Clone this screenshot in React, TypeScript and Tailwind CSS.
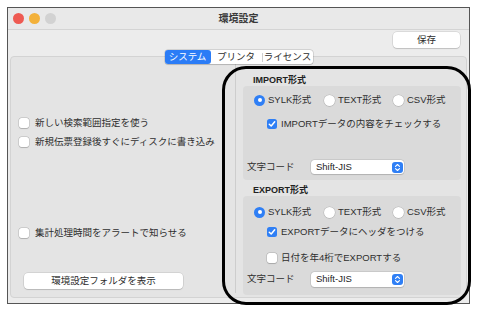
import React from "react";

const FONT = "font-['Liberation_Sans','Noto_Sans_CJK_JP',sans-serif]";

function Check({ checked }: { checked: boolean }) {
  if (checked) {
    return (
      <span className="w-[10px] h-[10px] rounded-[2.5px] bg-[#2f7ff5] flex items-center justify-center shrink-0">
        <svg width="8" height="8" viewBox="0 0 8 8">
          <path d="M1.3 4.2 L3.2 6 L6.7 1.8" fill="none" stroke="white" strokeWidth="1.5" strokeLinecap="round" strokeLinejoin="round" />
        </svg>
      </span>
    );
  }
  return (
    <span className="w-[10px] h-[10px] rounded-[2.5px] bg-white shadow-[0_0_0_0.5px_rgba(0,0,0,0.18),0_0.5px_1px_rgba(0,0,0,0.15)] shrink-0" />
  );
}

function Radio({ on, label, w }: { on: boolean; label: string; w: string }) {
  return (
    <div className={`flex items-center gap-[3px] ${w}`}>
      {on ? (
        <span className="w-[11px] h-[11px] rounded-full bg-[#2f7ff5] flex items-center justify-center shrink-0">
          <span className="w-[4px] h-[4px] rounded-full bg-white" />
        </span>
      ) : (
        <span className="w-[11px] h-[11px] rounded-full bg-white shadow-[0_0_0_0.5px_rgba(0,0,0,0.15),0_0.5px_1px_rgba(0,0,0,0.15)] shrink-0" />
      )}
      <span>{label}</span>
    </div>
  );
}

function Select({ h }: { h: string }) {
  return (
    <div className={`w-[93px] ${h} rounded-[3.5px] bg-white shadow-[0_0_0_0.5px_rgba(0,0,0,0.15),0_1px_1px_rgba(0,0,0,0.12)] flex items-center justify-between pl-[5px] pr-[1px]`}>
      <span className="text-[#1e1e1e]">Shift-JIS</span>
      <span className="w-[11px] h-[11px] rounded-[3px] bg-[#2f7ff5] flex items-center justify-center">
        <svg width="7" height="9" viewBox="0 0 7 9">
          <path d="M1.5 3.3 L3.5 1.5 L5.5 3.3 M1.5 5.7 L3.5 7.5 L5.5 5.7" fill="none" stroke="white" strokeWidth="1.1" strokeLinecap="round" strokeLinejoin="round" />
        </svg>
      </span>
    </div>
  );
}

export default function App() {
  return (
    <div className={`relative w-[481px] h-[311px] bg-white pt-[7px] pl-[7px] overflow-hidden ${FONT} text-[9.5px] text-[#2e2e2e]`}>
      <div className="w-[463px] h-[297px] border border-[#555555] bg-[#ececec] flex flex-col">
        {/* title bar */}
        <div className="h-[22px] shrink-0 border-b border-[#d4d4d4] bg-[#e9e9e9] grid grid-cols-[1fr_auto_1fr] items-center">
          <div className="flex gap-[5px] pl-[5px]">
            <span className="w-[11px] h-[11px] rounded-full bg-[#ee5a52]" />
            <span className="w-[11px] h-[11px] rounded-full bg-[#f3b13a]" />
            <span className="w-[11px] h-[11px] rounded-full bg-[#d2d2d2]" />
          </div>
          <div className="text-[10px] font-semibold text-[#3a3a3a]">環境設定</div>
          <div />
        </div>

        {/* body */}
        <div className="flex-1 flex flex-col">
          <div className="flex justify-end pt-[2px] pr-[9px]">
            <div className="w-[67px] h-[16px] rounded-[4px] bg-white shadow-[0_0_0_0.5px_rgba(0,0,0,0.15),0_1px_1px_rgba(0,0,0,0.12)] flex items-center justify-center">
              保存
            </div>
          </div>

          <div className="relative z-10 mt-[2px] flex justify-center">
            <div className="flex h-[14px] rounded-[3px] bg-white shadow-[0_0_0_0.5px_rgba(0,0,0,0.2),0_0.5px_1px_rgba(0,0,0,0.12)] items-center">
              <div className="w-[46px] h-[14px] rounded-[3px] bg-[#2b7cf6] text-white flex items-center justify-center">システム</div>
              <div className="w-[51px] h-[14px] flex items-center justify-center">プリンタ</div>
              <div className="w-px h-[9px] bg-[#cfcfcf]" />
              <div className="w-[50px] h-[14px] flex items-center justify-center">ライセンス</div>
            </div>
          </div>

          <div className="-mt-[8px] mx-[2px] h-[242px] border border-[#d3d3d3] rounded-[4px] bg-[#e4e4e4] flex">
            {/* left column */}
            <div className="w-[224px] flex flex-col pl-[8px] pt-[58px]">
              <div className="h-[16px] flex items-center gap-[6px]">
                <Check checked={false} />
                <span>新しい検索範囲指定を使う</span>
              </div>
              <div className="mt-[3px] h-[16px] flex items-center gap-[6px]">
                <Check checked={false} />
                <span>新規伝票登録後すぐにディスクに書き込み</span>
              </div>
              <div className="mt-[75px] h-[16px] flex items-center gap-[6px]">
                <Check checked={false} />
                <span>集計処理時間をアラートで知らせる</span>
              </div>
              <div className="mt-[32px] ml-[5px] w-[159px] h-[16px] rounded-[4px] bg-white shadow-[0_0_0_0.5px_rgba(0,0,0,0.15),0_1px_1px_rgba(0,0,0,0.12)] flex items-center justify-center">
                環境設定フォルダを表示
              </div>
            </div>

            <div className="w-px my-[4px] bg-[#cdcdcd]" />

            {/* right column */}
            <div className="flex-1 flex flex-col pl-[7px] pr-[5px] pt-[17px]">
              <div className="h-[12px] leading-[12px] pl-[10px] font-bold text-[9px] text-[#222]">IMPORT形式</div>
              <div className="h-[94px] rounded-[4px] bg-[#dadada] flex flex-col pt-[6px]">
                <div className="h-[16px] flex items-center pl-[11px]">
                  <Radio on={true} label="SYLK形式" w="w-[70px]" />
                  <Radio on={false} label="TEXT形式" w="w-[69px]" />
                  <Radio on={false} label="CSV形式" w="" />
                </div>
                <div className="mt-[8px] h-[16px] flex items-center gap-[4px] pl-[24px]">
                  <Check checked={true} />
                  <span>IMPORTデータの内容をチェックする</span>
                </div>
                <div className="mt-[28px] h-[14px] flex items-center pl-[4px]">
                  <span className="w-[64px]">文字コード</span>
                  <Select h="h-[14px]" />
                </div>
              </div>

              <div className="mt-[4px] h-[12px] leading-[12px] pl-[10px] font-bold text-[9px] text-[#222]">EXPORT形式</div>
              <div className="h-[99px] rounded-[4px] bg-[#dadada] flex flex-col pt-[8px]">
                <div className="h-[16px] flex items-center pl-[11px]">
                  <Radio on={true} label="SYLK形式" w="w-[70px]" />
                  <Radio on={false} label="TEXT形式" w="w-[69px]" />
                  <Radio on={false} label="CSV形式" w="" />
                </div>
                <div className="mt-[4px] h-[16px] flex items-center gap-[4px] pl-[24px]">
                  <Check checked={true} />
                  <span>EXPORTデータにヘッダをつける</span>
                </div>
                <div className="mt-[10px] h-[16px] flex items-center gap-[4px] pl-[24px]">
                  <Check checked={false} />
                  <span>日付を年4桁でEXPORTする</span>
                </div>
                <div className="mt-[6px] h-[15px] flex items-center pl-[4px]">
                  <span className="w-[64px]">文字コード</span>
                  <Select h="h-[15px]" />
                </div>
              </div>
            </div>
          </div>
        </div>
      </div>

      {/* annotation overlay */}
      <div className="absolute left-[222px] top-[66px] w-[249px] h-[239px] border-[3px] border-black rounded-[24px] pointer-events-none" />
    </div>
  );
}
